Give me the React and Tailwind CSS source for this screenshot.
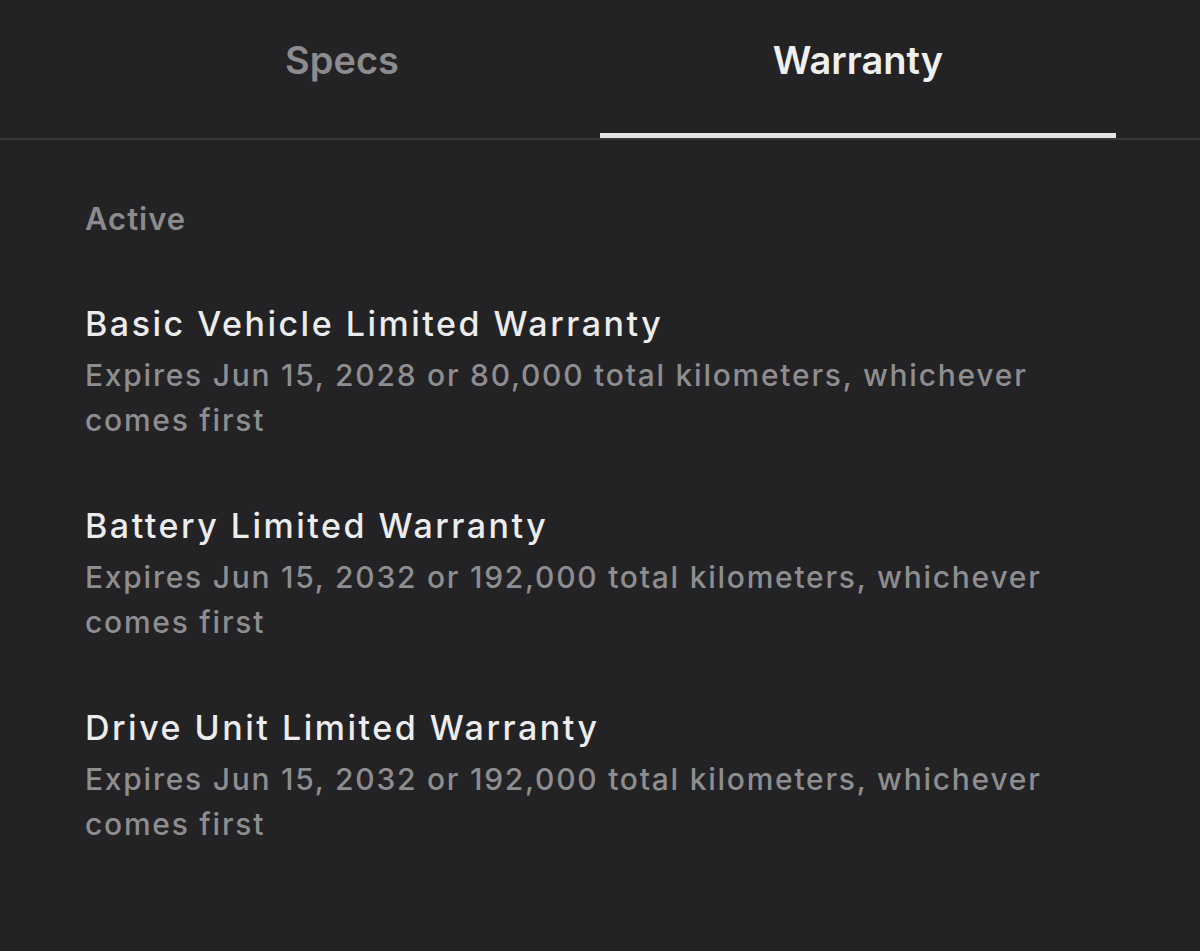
import React from 'react';

const warranties = [
  {
    title: 'Basic Vehicle Limited Warranty',
    detail: 'Expires Jun 15, 2028 or 80,000 total kilometers, whichever comes first',
  },
  {
    title: 'Battery Limited Warranty',
    detail: 'Expires Jun 15, 2032 or 192,000 total kilometers, whichever comes first',
  },
  {
    title: 'Drive Unit Limited Warranty',
    detail: 'Expires Jun 15, 2032 or 192,000 total kilometers, whichever comes first',
  },
];

export default function App() {
  return (
    <div className="w-full h-[951px] bg-[#232225] font-['Inter','Liberation_Sans',sans-serif] antialiased">
      {/* Tabs */}
      <div className="flex px-[84px] border-b-2 border-[#39383b]">
        <div className="flex-1 h-[138px] pt-[41px] text-center text-[38px] leading-none font-semibold text-[#8c8b8e] border-b-[5px] border-transparent">
          Specs
        </div>
        <div className="flex-1 h-[138px] pt-[41px] text-center text-[38px] leading-none font-semibold text-[#efeff0] border-b-[5px] border-[#e4e4e6]">
          Warranty
        </div>
      </div>

      {/* Warranty list */}
      <div className="pl-[85px] pr-[84px] pt-[59px]">
        <div className="text-[31px] leading-[40px] font-semibold tracking-[1px] text-[#8b8a8d]">Active</div>

        <div className="mt-[63px] flex flex-col gap-[61px]">
          {warranties.map((w) => (
            <div key={w.title}>
              <div className="text-[34px] leading-[44px] font-medium tracking-[2.5px] text-[#ececed]">{w.title}</div>
              <div className="mt-[7px] text-[30px] leading-[45px] font-medium tracking-[1.75px] text-[#8e8d90]">{w.detail}</div>
            </div>
          ))}
        </div>
      </div>
    </div>
  );
}
